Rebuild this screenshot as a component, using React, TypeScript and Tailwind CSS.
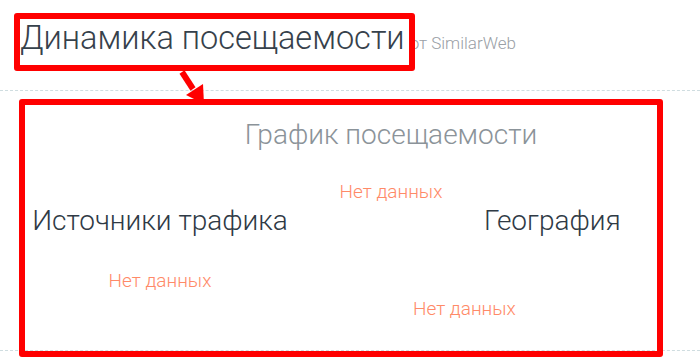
import React from "react";

const font = { fontFamily: "Roboto, 'Noto Sans', sans-serif" };

const NoData = ({ className = "" }: { className?: string }) => (
  <p className={`text-[19px] font-light leading-[22px] text-[#ff8a68] ${className}`}>
    Нет данных
  </p>
);

const App: React.FC = () => {
  return (
    <div
      className="relative w-[700px] h-[359px] overflow-hidden bg-white"
      style={font}
    >
      {/* Header */}
      <div className="flex items-baseline h-[90px] pl-[20px] pt-[18px]">
        <h2 className="text-[32.5px] font-light leading-[40px] text-[#36414b]">
          Динамика посещаемости
        </h2>
        <span className="ml-[5px] text-[17px] font-light text-[#9aa0a6]">
          от SimilarWeb
        </span>
      </div>

      {/* Content */}
      <div className="h-[261px] border-t border-b border-dashed border-[#cfdde0]">
        <div className="flex flex-col items-center ml-[82px] pt-[28px]">
          <h3 className="text-[28px] font-light leading-[32px] text-[#8b9399]">
            График посещаемости
          </h3>
          <NoData className="mt-[30px]" />
        </div>

        <div className="flex mt-[2px]">
          <div className="flex flex-col items-center w-[320px]">
            <h3 className="text-[28px] font-light leading-[32px] text-[#2f3a45]">
              Источники трафика
            </h3>
            <NoData className="mt-[33px]" />
          </div>
          <div className="flex flex-col">
            <h3 className="ml-[164px] text-[28px] font-light leading-[32px] text-[#2f3a45]">
              География
            </h3>
            <NoData className="ml-[93px] mt-[61px]" />
          </div>
        </div>
      </div>

      {/* Annotations */}
      <div className="absolute left-[14px] top-[13px] w-[401px] h-[58px] border-[6px] border-[#ff0000] rounded-[3px]" />
      <div className="absolute left-[19px] top-[99px] w-[644px] h-[258px] border-[6px] border-[#ff0000] rounded-[3px]" />
      <svg
        className="absolute left-0 top-0"
        width="700"
        height="359"
        viewBox="0 0 700 359"
      >
        <line
          x1="182"
          y1="72"
          x2="193"
          y2="89"
          stroke="#ff0000"
          strokeWidth="6"
        />
        <polygon points="204,104 186,95 203,84" fill="#ff0000" />
      </svg>
    </div>
  );
};

export default App;
